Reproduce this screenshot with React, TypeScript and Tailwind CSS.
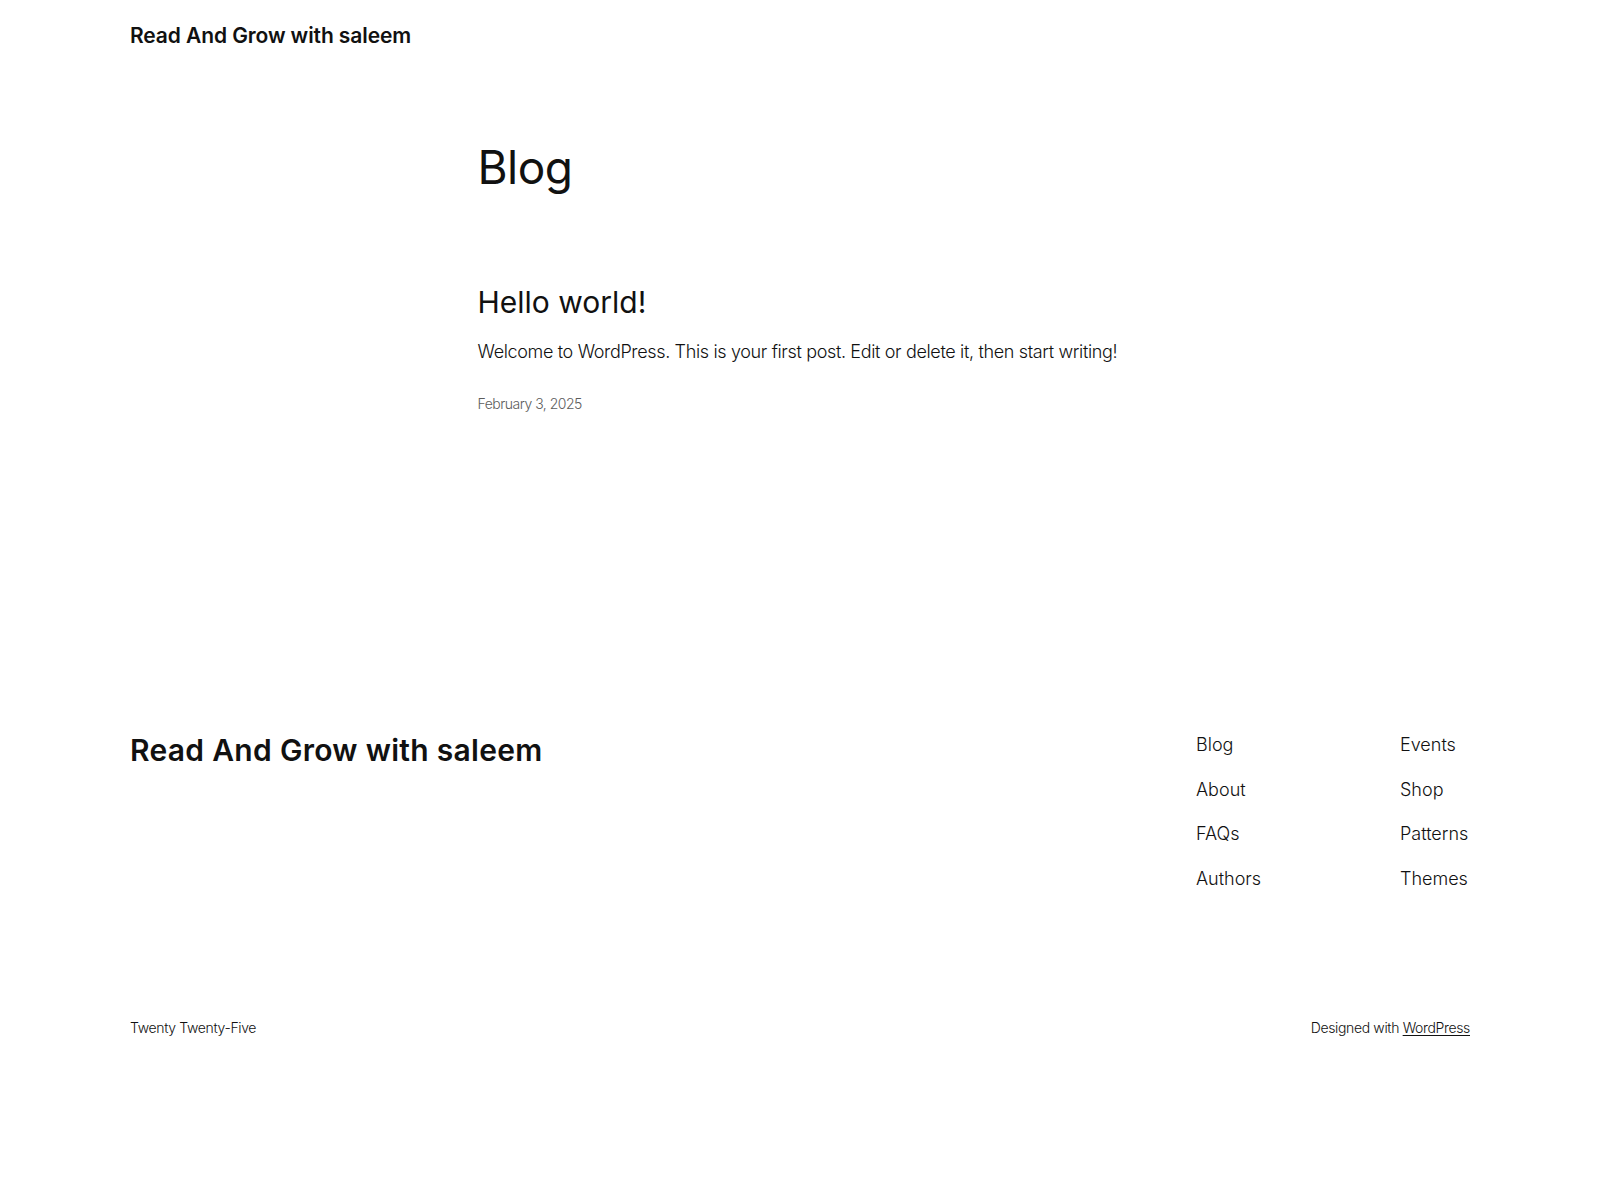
const navLeft = ['Blog', 'About', 'FAQs', 'Authors'];
const navRight = ['Events', 'Shop', 'Patterns', 'Themes'];

function NavColumn({ items }: { items: string[] }) {
  return (
    <ul className="flex flex-col gap-[19.6px]">
      {items.map(item => (
        <li key={item}>
          <a href="#" className="block text-[18px] font-light leading-[25.2px] text-[#111111]">
            {item}
          </a>
        </li>
      ))}
    </ul>
  );
}

export default function App() {
  return (
    <div className="min-h-[1200px] bg-white font-['Inter','Liberation_Sans',sans-serif] text-[#111111]">
      <div className="mx-auto w-[1340px]">
        {/* Site header */}
        <header className="flex h-[70px] items-center">
          <a href="#" className="text-[21px] font-semibold leading-none tracking-[-0.1px]">
            Read And Grow with saleem
          </a>
        </header>

        {/* Blog index */}
        <main className="mx-auto w-[645px]">
          <h1 className="mt-[69px] text-[46px] font-normal leading-[57.6px] tracking-[-0.5px]">Blog</h1>

          <article className="mt-[87px]">
            <h2 className="text-[30px] font-normal leading-[36px] tracking-[0px]">
              <a href="#">Hello world!</a>
            </h2>
            <p className="mt-[19px] whitespace-nowrap text-[18px] font-light leading-[25.2px] tracking-[-0.35px]">
              Welcome to WordPress. This is your first post. Edit or delete it, then start writing!
            </p>
            <time className="mt-[30px] block text-[14px] font-light leading-[20px] tracking-[-0.5px] text-[#5c5c5c]">
              February 3, 2025
            </time>
          </article>
        </main>

        {/* Footer */}
        <footer className="mt-[318px]">
          <div className="flex items-start justify-between">
            <h2 className="text-[30px] font-semibold leading-[36px] tracking-[0.3px]">
              Read And Grow with saleem
            </h2>
            <nav className="flex">
              <div className="w-[204px]">
                <NavColumn items={navLeft} />
              </div>
              <div className="w-[70px]">
                <NavColumn items={navRight} />
              </div>
            </nav>
          </div>

          <div className="mt-[127px] flex items-center justify-between text-[14px] font-light leading-[20px] tracking-[-0.35px]">
            <p>Twenty Twenty-Five</p>
            <p>
              Designed with{' '}
              <a href="#" className="underline underline-offset-2">
                WordPress
              </a>
            </p>
          </div>
        </footer>
      </div>
    </div>
  );
}
